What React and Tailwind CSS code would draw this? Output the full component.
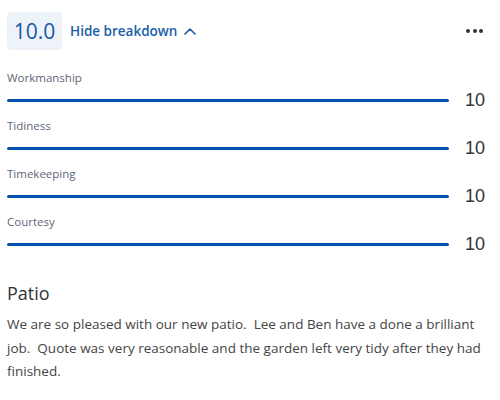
import React from "react";

const rows = ["Workmanship", "Tidiness", "Timekeeping", "Courtesy"];

export default function App() {
  return (
    <div className="w-[500px] h-[400px] bg-white pl-[7px] pr-[15px] pt-[12px] font-['Open_Sans',sans-serif] overflow-hidden">
      <div className="flex items-center justify-between h-[38px]">
        <div className="flex items-center gap-[8px]">
          <div className="w-[55px] h-[38px] rounded-[4px] bg-[#eef3fa] flex items-center justify-center text-[21px] text-[#1757a6] leading-none">
            10.0
          </div>
          <button className="flex items-center gap-[7px] text-[13.5px] font-semibold text-[#1a5eab]">
            <span>Hide breakdown</span>
            <svg width="12" height="8" viewBox="0 0 12 8" fill="none">
              <path d="M1 7 L6 2 L11 7" stroke="#1a5eab" strokeWidth="1.6" strokeLinecap="round" strokeLinejoin="round" />
            </svg>
          </button>
        </div>
        <div className="flex items-center gap-[2.5px] mr-[2px]">
          <span className="w-[4px] h-[4px] rounded-full bg-[#333]" />
          <span className="w-[4px] h-[4px] rounded-full bg-[#333]" />
          <span className="w-[4px] h-[4px] rounded-full bg-[#333]" />
        </div>
      </div>

      <div className="mt-[20px] flex flex-col gap-[7px]">
        {rows.map((r) => (
          <div key={r}>
            <div className="h-[16px] leading-[16px] text-[11.5px] text-[#606678]">{r}</div>
            <div className="mt-[3px] h-[22px] flex items-center">
              <div className="flex-1 h-[3px] rounded-full bg-[#0552ad]" />
              <div className="ml-[16px] text-[18px] leading-none text-[#333] font-['Liberation_Sans',sans-serif]">10</div>
            </div>
          </div>
        ))}
      </div>

      <div className="mt-[26px] text-[18px] leading-[24px] text-[#333]">Patio</div>
      <p className="mt-[8px] text-[13.5px] leading-[23.5px] text-[#444] whitespace-pre-wrap">
        {"We are so pleased with our new patio.  Lee and Ben have a done a brilliant job.  Quote was very reasonable and the garden left very tidy after they had finished."}
      </p>
    </div>
  );
}
